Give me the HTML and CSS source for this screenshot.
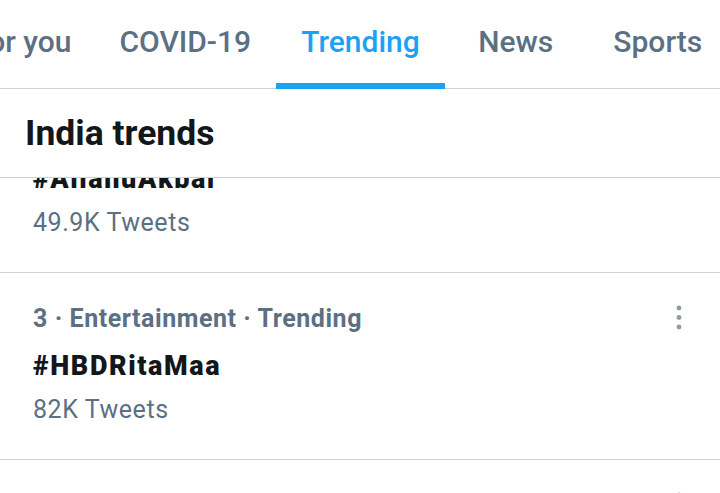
FILE: index.html
```html
<!DOCTYPE html>
<html lang="en">
<head>
    <meta charset="UTF-8">
    <meta name="viewport" content="width=device-width, initial-scale=1.0">
    <title>Explore - Trending</title>
    <link rel="stylesheet" href="styles.css">
</head>
<body>
    <nav class="tabs">
        <a class="tab" href="#">For you</a>
        <a class="tab" href="#">COVID-19</a>
        <a class="tab active" href="#">Trending</a>
        <a class="tab" href="#">News</a>
        <a class="tab" href="#">Sports</a>
    </nav>

    <h1 class="section-title">India trends</h1>

    <div class="feed">
        <div class="trend first">
            <div class="meta">
                <span>2 · Politics · Trending</span>
                <svg class="more" width="10" height="30" viewBox="0 0 10 30"><circle cx="5" cy="5" r="2.4"/><circle cx="5" cy="14.5" r="2.4"/><circle cx="5" cy="24" r="2.4"/></svg>
            </div>
            <div class="tag">#AllahuAkbar</div>
            <div class="count">49.9K Tweets</div>
        </div>
        <div class="trend">
            <div class="meta">
                <span>3 · Entertainment · Trending</span>
                <svg class="more" width="10" height="30" viewBox="0 0 10 30"><circle cx="5" cy="5" r="2.4"/><circle cx="5" cy="14.5" r="2.4"/><circle cx="5" cy="24" r="2.4"/></svg>
            </div>
            <div class="tag">#HBDRitaMaa</div>
            <div class="count">82K Tweets</div>
        </div>
        <div class="trend">
            <div class="meta">
                <span>4 · Sports · Trending</span>
                <svg class="more" width="10" height="30" viewBox="0 0 10 30"><circle cx="5" cy="5" r="2.4"/><circle cx="5" cy="14.5" r="2.4"/><circle cx="5" cy="24" r="2.4"/></svg>
            </div>
            <div class="tag">#IPL2020</div>
            <div class="count">31.2K Tweets</div>
        </div>
    </div>
</body>
</html>
```

FILE: styles.css
```css
body {
    font-family: Roboto, "Noto Sans", sans-serif;
    margin: 0;
    padding: 0;
    background: #fff;
    overflow: hidden;
    height: 493px;
}
.tabs {
    display: flex;
    height: 88px;
    border-bottom: 1px solid #ccd3d8;
    margin-left: -53px;
}
.tab {
    flex-shrink: 0;
    min-width: 142px;
    box-sizing: border-box;
    padding: 0 25px;
    display: flex;
    align-items: center;
    justify-content: center;
    border-bottom: 6px solid transparent;
    margin-bottom: -1px;
    color: #5b7083;
    text-decoration: none;
    font-size: 30px;
    font-weight: 500;
    white-space: nowrap;
}
.tab:first-child {
    margin-right: -2px;
}
.tab.active {
    color: #1da1f2;
    border-bottom-color: #1da1f2;
}
.section-title {
    margin: 0;
    height: 88px;
    padding: 0 25px;
    display: flex;
    align-items: center;
    border-bottom: 1px solid #ccd3d8;
    font-size: 35.5px;
    font-weight: 700;
    color: #14171a;
    position: relative;
    z-index: 1;
    background: #fff;
}
.feed {
    overflow: hidden;
}
.trend {
    padding: 30px 36px 34px 33px;
    border-bottom: 1px solid #ccd3d8;
}
.trend.first {
    margin-top: -92px;
}
.meta {
    display: flex;
    justify-content: space-between;
    align-items: center;
    height: 30px;
    font-size: 25px;
    font-weight: 700;
    letter-spacing: 0.55px;
    color: #5b7083;
}
.more {
    fill: #8e9ba5;
}
.tag {
    margin-top: 18px;
    line-height: 30px;
    font-size: 27px;
    font-weight: 900;
    letter-spacing: 1.6px;
    color: #14171a;
}
.count {
    margin-top: 14px;
    line-height: 30px;
    font-size: 25px;
    letter-spacing: 0.55px;
    color: #5b7083;
}
```
